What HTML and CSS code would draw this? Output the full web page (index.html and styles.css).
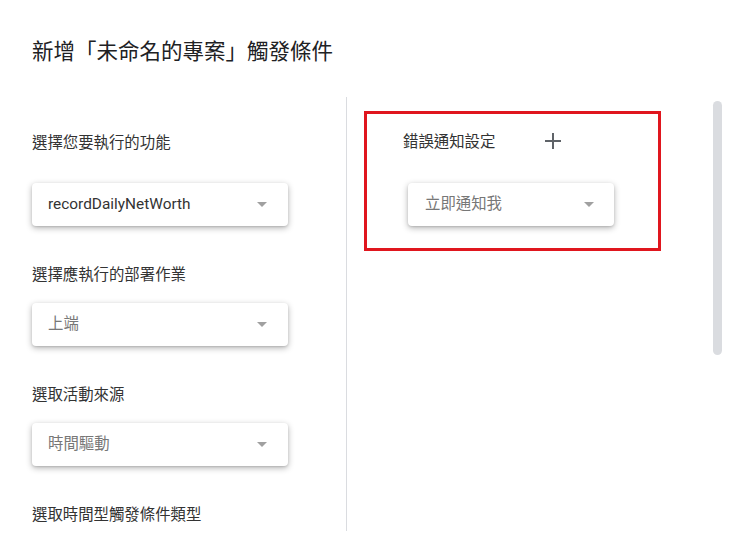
FILE: index.html
```html
<!DOCTYPE html>
<html lang="zh-Hant">
<head>
<meta charset="utf-8">
<title>新增觸發條件</title>
<link rel="stylesheet" href="styles.css">
</head>
<body>
<div class="dialog">
  <h1 class="title">新增「未命名的專案」觸發條件</h1>
  <div class="columns">
    <div class="col-left">
      <div class="field first">
        <div class="label">選擇您要執行的功能</div>
        <div class="select"><span class="value dark">recordDailyNetWorth</span><span class="arrow"></span></div>
      </div>
      <div class="field">
        <div class="label">選擇應執行的部署作業</div>
        <div class="select"><span class="value">上端</span><span class="arrow"></span></div>
      </div>
      <div class="field">
        <div class="label">選取活動來源</div>
        <div class="select"><span class="value">時間驅動</span><span class="arrow"></span></div>
      </div>
      <div class="field">
        <div class="label">選取時間型觸發條件類型</div>
      </div>
    </div>
    <div class="col-right">
      <div class="highlight">
        <div class="notify-head">
          <span class="label">錯誤通知設定</span>
          <svg class="plus" width="16" height="16" viewBox="0 0 16 16" aria-hidden="true"><path d="M8 0v16M0 8h16" stroke="#5f6368" stroke-width="2" fill="none"/></svg>
        </div>
        <div class="select narrow"><span class="value">立即通知我</span><span class="arrow"></span></div>
      </div>
    </div>
  </div>
  <div class="scroll-thumb"></div>
</div>
</body>
</html>
```

FILE: styles.css
```css
html, body {
  margin: 0;
  padding: 0;
  background: #ffffff;
}

body {
  font-family: Roboto, "Noto Sans CJK TC", "Noto Sans", sans-serif;
  color: #333333;
}

.dialog {
  position: relative;
  width: 740px;
  height: 544px;
  overflow: hidden;
}

.title {
  margin: 0;
  padding: 40px 32px 0;
  font-size: 21.5px;
  line-height: 24px;
  font-weight: 400;
  color: #202124;
  height: 57px;
}

.columns {
  display: flex;
  height: 434px;
}

.col-left {
  width: 314px;
  padding-left: 32px;
  border-right: 1px solid #dadce0;
  padding-top: 36px;
}

.field {
  margin-top: 39px;
}

.field.first {
  margin-top: 0;
}

.label {
  font-size: 15.4px;
  line-height: 20px;
  color: #333333;
  margin-bottom: 18px;
}

.field.first .label {
  margin-bottom: 30px;
}

.select {
  width: 256px;
  height: 43px;
  box-sizing: border-box;
  display: flex;
  align-items: center;
  justify-content: space-between;
  padding: 0 21px 0 16px;
  background: #ffffff;
  border-radius: 4px;
  box-shadow: 0 2px 6px rgba(0, 0, 0, 0.3), 0 1px 2px rgba(0, 0, 0, 0.1);
}

.value {
  font-size: 15.4px;
  line-height: 20px;
  color: #777777;
  margin-top: -1px;
}

.value.dark {
  color: #333333;
}

.arrow {
  width: 0;
  height: 0;
  border-left: 5px solid transparent;
  border-right: 5px solid transparent;
  border-top: 5px solid #a0a0a0;
}

.col-right {
  flex: 1;
  padding: 14px 0 0 17px;
}

.highlight {
  border: 3px solid #e0161e;
  padding: 18px 0 0 36px;
  width: 255px;
  height: 116px;
}

.notify-head {
  display: flex;
  align-items: center;
  height: 20px;
}

.notify-head .label {
  margin-bottom: 0;
}

.plus {
  margin-left: 50px;
  margin-top: -3px;
}

.select.narrow {
  width: 206px;
  margin-top: 31px;
  margin-left: 5px;
  padding: 0 20px 0 17px;
}

.scroll-thumb {
  position: absolute;
  left: 713px;
  top: 101px;
  width: 9px;
  height: 254px;
  border-radius: 5px;
  background: #dadce0;
}
```
